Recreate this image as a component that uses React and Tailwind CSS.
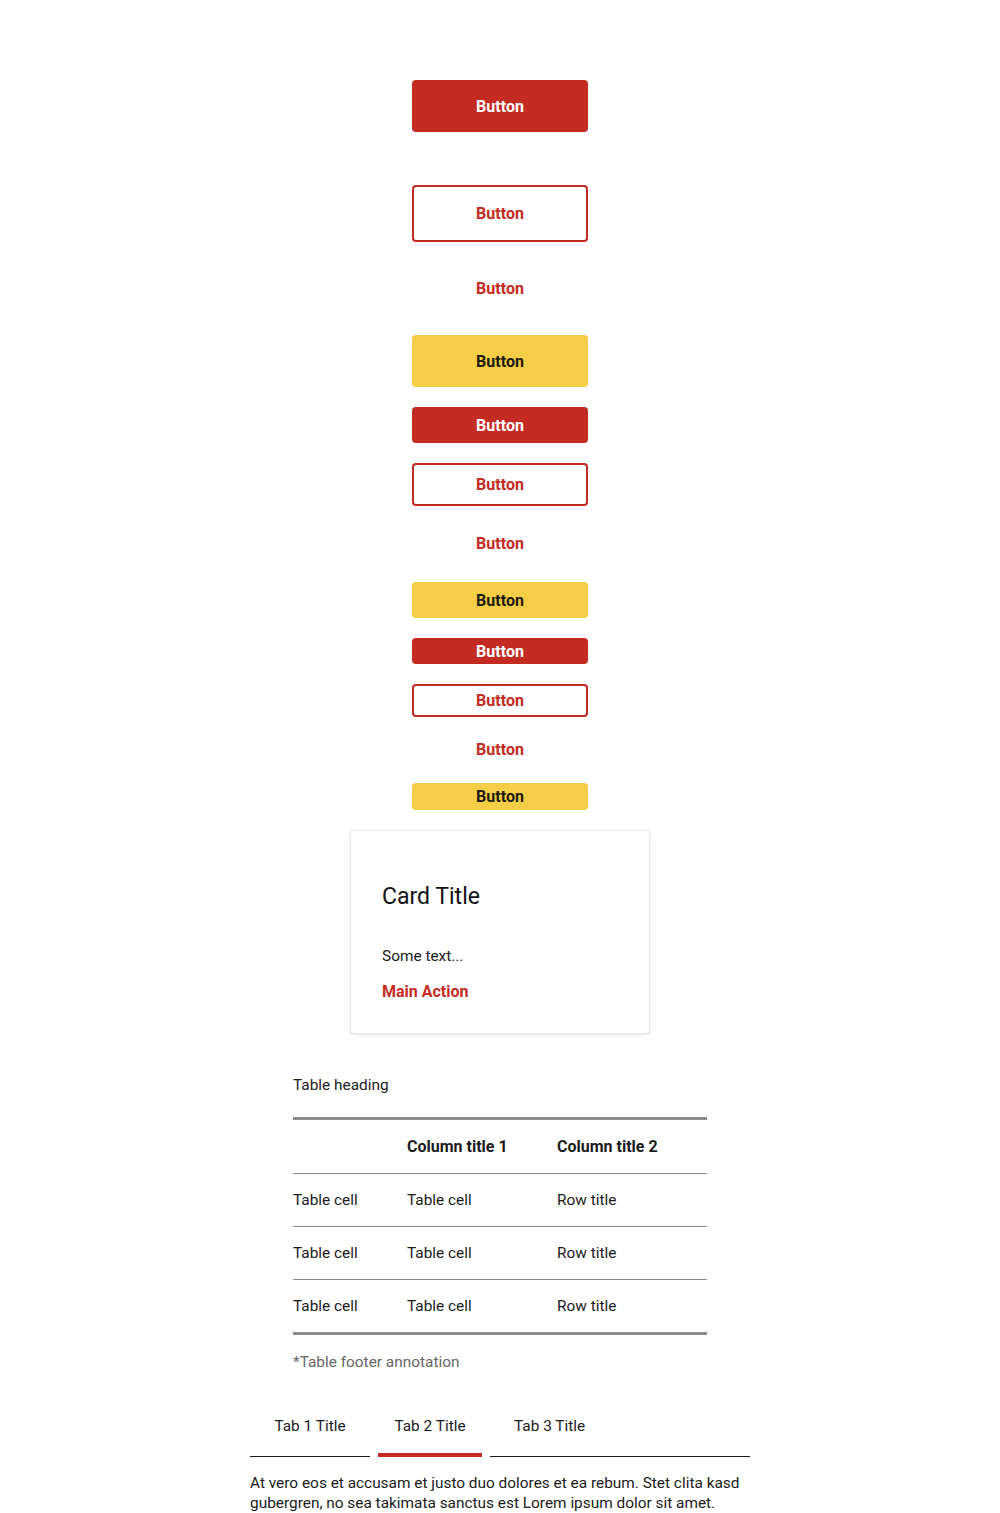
import { useState } from 'react';

const font = { fontFamily: 'Roboto, "Noto Sans", sans-serif' };

const btnBase = 'w-[176px] flex items-center justify-center rounded-[4px] text-[16px] font-bold pt-[1px]';

const FilledButton = ({ h, className = '' }) => (
  <button className={`${btnBase} ${h} bg-[#c42b23] text-white ${className}`}>Button</button>
);

const OutlineButton = ({ h, className = '' }) => (
  <button className={`${btnBase} ${h} bg-white border-2 border-[#c42b23] text-[#c42b23] ${className}`}>Button</button>
);

const TextButton = ({ h, className = '' }) => (
  <button className={`${btnBase} ${h} text-[#c42b23] ${className}`}>Button</button>
);

const YellowButton = ({ h, className = '' }) => (
  <button className={`${btnBase} ${h} bg-[#f6cd46] text-[#1e1b10] ${className}`}>Button</button>
);

const rows = [
  ['Table cell', 'Table cell', 'Row title'],
  ['Table cell', 'Table cell', 'Row title'],
  ['Table cell', 'Table cell', 'Row title'],
];

export default function App() {
  const [tab, setTab] = useState(1);

  return (
    <div className="bg-white min-h-[1513px] flex flex-col items-center pt-[80px] text-[#1a1a1a]" style={font}>
      {/* buttons */}
      <FilledButton h="h-[52px]" />
      <OutlineButton h="h-[57px]" className="mt-[53px]" />
      <TextButton h="h-[52px]" className="mt-[20px]" />
      <YellowButton h="h-[52px]" className="mt-[21px]" />

      <FilledButton h="h-[36px]" className="mt-[20px]" />
      <OutlineButton h="h-[43px]" className="mt-[20px]" />
      <TextButton h="h-[36px]" className="mt-[19px]" />
      <YellowButton h="h-[36px]" className="mt-[21px]" />

      <FilledButton h="h-[26px]" className="mt-[20px]" />
      <OutlineButton h="h-[33px]" className="mt-[20px]" />
      <TextButton h="h-[26px]" className="mt-[19px]" />
      <YellowButton h="h-[27px]" className="mt-[21px]" />

      {/* card */}
      <div className="mt-[20px] w-[300px] h-[204px] bg-white rounded-[4px] border border-[#ececec] shadow-[0_1px_3px_rgba(0,0,0,0.12)] px-[31px] pt-[50px]">
        <h2 className="text-[23px] leading-[32px] text-[#111]">Card Title</h2>
        <p className="mt-[33px] text-[15.4px] leading-[20px]">Some text...</p>
        <a className="block mt-[16px] text-[16px] leading-[20px] font-bold text-[#c42b23]">Main Action</a>
      </div>

      {/* table */}
      <div className="w-[414px] mt-[41px] text-[15.4px] leading-[20px]">
        <div className="text-[#222]">Table heading</div>
        <div className="mt-[22px] border-t-[3px] border-b-[3px] border-[#8c8c8c]">
          <div className="grid grid-cols-[114px_150px_1fr] items-center h-[54px] border-b border-[#8c8c8c] text-[16px] font-bold">
            <div></div>
            <div>Column title 1</div>
            <div>Column title 2</div>
          </div>
          {rows.map((r, i) => (
            <div
              key={i}
              className={`grid grid-cols-[114px_150px_1fr] items-center ${i < rows.length - 1 ? 'h-[53px] border-b border-[#8c8c8c]' : 'h-[52px]'}`}
            >
              {r.map((c, j) => (
                <div key={j}>{c}</div>
              ))}
            </div>
          ))}
        </div>
        <div className="mt-[17px] text-[#666]">*Table footer annotation</div>
      </div>

      {/* tabs */}
      <div className="w-[500px] mt-[29px] text-[15.4px] leading-[20px]">
        <div className="flex items-end">
          <button onClick={() => setTab(0)} className={`w-[120px] pt-[15px] text-center ${tab === 0 ? 'pb-[17px] border-b-4 border-[#c42b23]' : 'pb-[20px] border-b border-[#1a1a1a]'}`}>Tab 1 Title</button>
          <button onClick={() => setTab(1)} className={`w-[104px] ml-[8px] pt-[15px] text-center ${tab === 1 ? 'pb-[17px] border-b-4 border-[#c42b23]' : 'pb-[20px] border-b border-[#1a1a1a]'}`}>Tab 2 Title</button>
          <div className="flex-1 ml-[8px] border-b border-[#1a1a1a] pb-[20px] pt-[15px]">
            <button onClick={() => setTab(2)} className="pl-[24px]">Tab 3 Title</button>
          </div>
        </div>
        <p className="mt-[16px]">
          At vero eos et accusam et justo duo dolores et ea rebum. Stet clita kasd gubergren, no sea takimata sanctus est Lorem ipsum dolor sit amet.
        </p>
      </div>
    </div>
  );
}
